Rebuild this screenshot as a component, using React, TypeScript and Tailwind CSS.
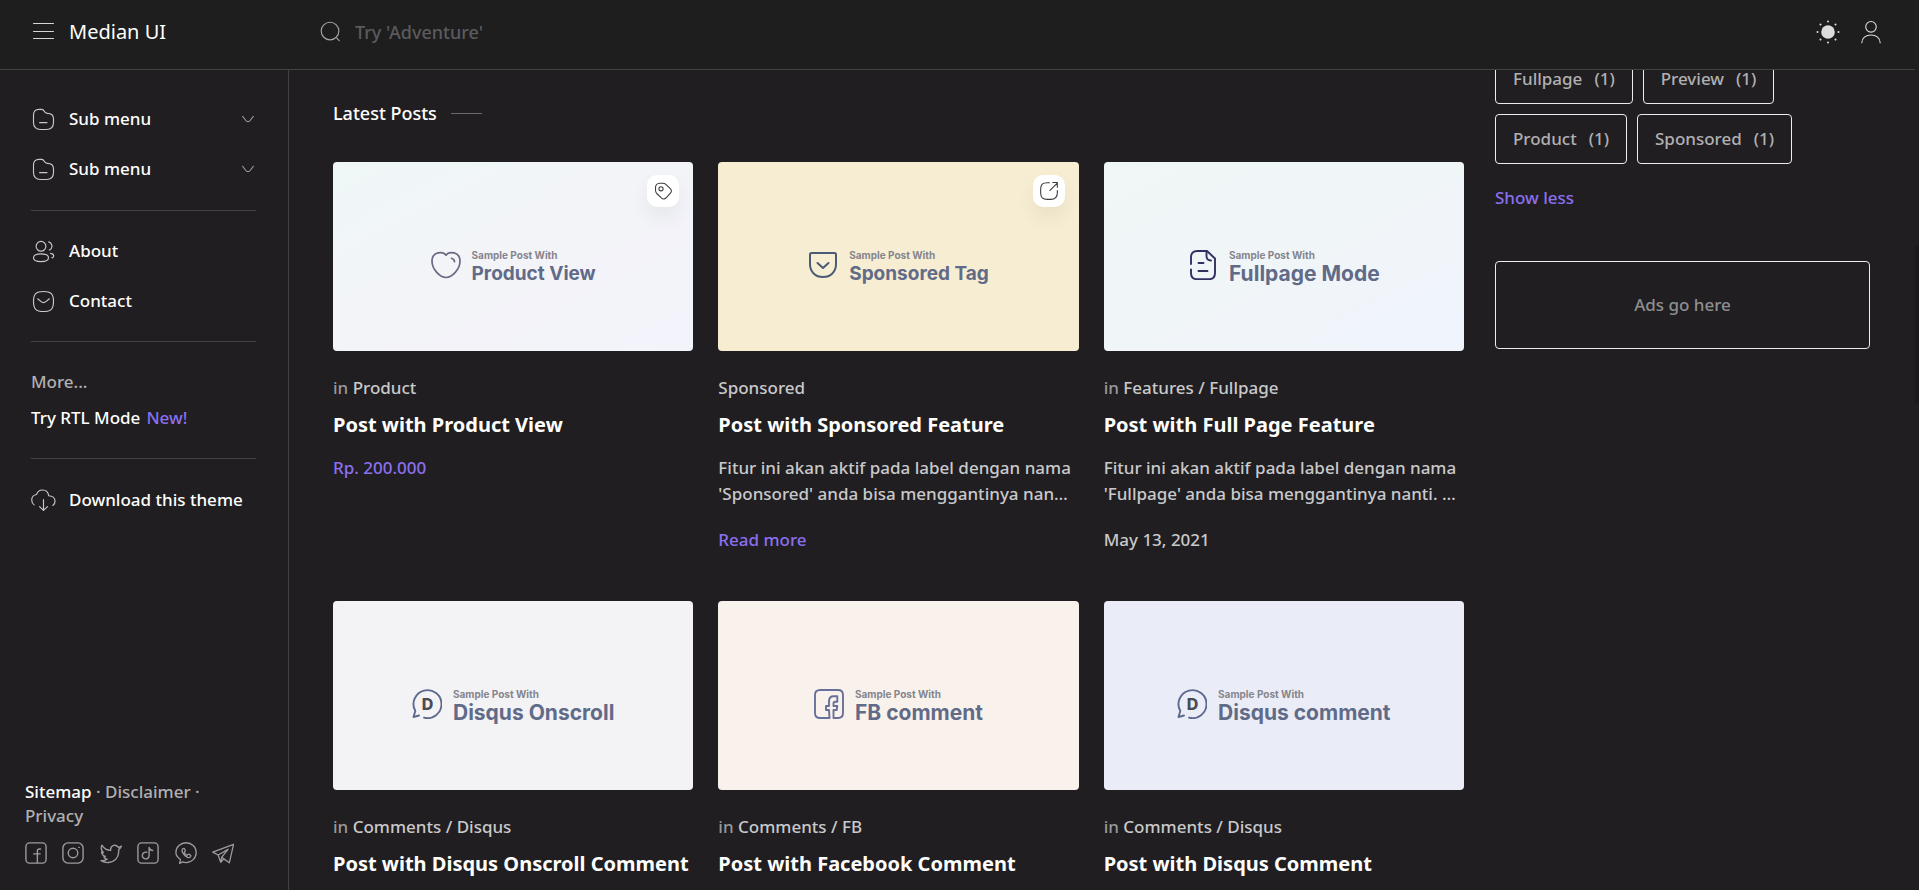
import React from 'react';

type IconProps = { className?: string };

const stroke = {
  fill: 'none',
  stroke: 'currentColor',
  strokeLinecap: 'round' as const,
  strokeLinejoin: 'round' as const,
};

/* ---------- UI icons ---------- */

const MenuIcon = ({ className }: IconProps) => (
  <svg viewBox="0 0 25 25" className={className} {...stroke} strokeWidth={1}>
    <path d="M2.5 4.5h20M2.5 12.5h20M2.5 19.5h20" />
  </svg>
);

const SearchIcon = ({ className }: IconProps) => (
  <svg viewBox="0 0 24 24" className={className} {...stroke} strokeWidth={1.2}>
    <circle cx="11.5" cy="11.5" r="9.2" />
    <path d="M18.5 18.9l2.6 2.6" />
  </svg>
);

const SunIcon = ({ className }: IconProps) => (
  <svg viewBox="0 0 24 24" className={className} {...stroke} strokeWidth={2}>
    <circle cx="12" cy="12" r="6.8" fill="currentColor" stroke="none" />
    <path d="M12 1.500v.01M12 22.500v-.01M1.500 12h.01M22.500 12h-.01M4.500 4.500l.01.01M19.500 19.500l-.01-.01M4.500 19.500l.01-.01M19.500 4.500l-.01.01" />
  </svg>
);

const UserIcon = ({ className }: IconProps) => (
  <svg viewBox="0 0 24 24" className={className} {...stroke} strokeWidth={1.1}>
    <circle cx="12" cy="6.8" r="5.3" />
    <path d="M2.8 22.8c0-4.6 4-7.8 9.2-7.8s9.2 3.2 9.2 7.8" />
  </svg>
);

const FolderIcon = ({ className }: IconProps) => (
  <svg viewBox="0 0 24 24" className={className} {...stroke} strokeWidth={1.1}>
    <path d="M21.6 14.9c0 4.2-2.5 6.7-6.7 6.7H9.1c-4.2 0-6.7-2.5-6.7-6.7V7.9c0-3.6 1.6-5.6 5.4-5.6h2.1c.9 0 1.8.4 2.4 1.2l1.1 1.4c.6.7 1.4 1.2 2.4 1.2 3.600 0 5.800 1.500 5.800 5.400z" />
    <path d="M8.300 15h7" />
  </svg>
);

const ChevronIcon = ({ className }: IconProps) => (
  <svg viewBox="0 0 24 24" className={className} {...stroke} strokeWidth={1.6}>
    <path d="M4 8l4.800 6.200c1.800 2.300 4.600 2.300 6.400 0L20 8" />
  </svg>
);

const PeopleIcon = ({ className }: IconProps) => (
  <svg viewBox="0 0 24 24" className={className} {...stroke} strokeWidth={1.1}>
    <circle cx="9.600" cy="7" r="4.700" />
    <path d="M9.600 14.300c-3.900 0-7.200.9-7.200 3.700s3.300 3.700 7.200 3.700 7.200-.9 7.200-3.700-3.300-3.700-7.200-3.700z" />
    <path d="M17 2.800a4.300 4.300 0 0 1 1.800 7.200l-1.200.6M18.800 13.800c1.900.3 3 1.100 3 2.400 0 .9-.6 1.500-1.700 1.900" />
  </svg>
);

const MailIcon = ({ className }: IconProps) => (
  <svg viewBox="0 0 24 24" className={className} {...stroke} strokeWidth={1.1}>
    <path d="M12 2.400c7.200 0 9.600 2.400 9.600 9.600s-2.400 9.600-9.600 9.600S2.400 19.200 2.400 12 4.800 2.400 12 2.400z" />
    <path d="M6.400 9.400l3.300 2.700c1.400 1.100 3.200 1.100 4.600 0l3.300-2.700" />
  </svg>
);

const DownloadIcon = ({ className }: IconProps) => (
  <svg viewBox="0 0 24 24" className={className} {...stroke} strokeWidth={1.1}>
    <path d="M3 16.200c-1.500-1-2.300-2.700-2.300-4.600 0-2.800 2-5 4.700-5.400C6.200 3.400 8.500 1.900 11 1.900c3.100 0 5.500 2.200 6 5.500 3.300.1 6.100 2.100 6.100 5.400 0 1.700-.8 3.100-2.100 4" />
    <path d="M12 11v10.500M8.200 17.800L12 21.500l3.800-3.700" />
  </svg>
);

const TagIcon = ({ className }: IconProps) => (
  <svg viewBox="0 0 24 24" className={className} {...stroke} strokeWidth={1.300}>
    <path d="M3 8.200c0-3.400 1.800-5.200 5.200-5.400l3.500-.1c1.600 0 2.600.4 3.700 1.400l5.100 4.800c2 1.900 2.100 4 .2 6l-4.700 5.100c-1.900 2-4 2-6 .2l-5.200-4.900C3.700 14.200 3.200 13.200 3.100 11.700z" />
    <circle cx="9.600" cy="9.300" r="2.500" />
  </svg>
);

const ExternalIcon = ({ className }: IconProps) => (
  <svg viewBox="0 0 24 24" className={className} {...stroke} strokeWidth={1.300}>
    <path d="M22 11.500v2.500c0 5.700-2.200 8-8 8h-4c-5.700 0-8-2.300-8-8v-4c0-5.700 2.300-8 8-8h2.500" />
    <path d="M13.200 11.300l8.800-8.800M16.500 1.800H22v5.600" />
  </svg>
);

/* ---------- Social icons ---------- */

const Facebook = ({ className }: IconProps) => (
  <svg viewBox="0 0 24 24" className={className} {...stroke} strokeWidth={1.500}>
    <rect x="1" y="1" width="22" height="22" rx="4" />
    <path d="M17 7.700h-1.300c-1.500 0-2.200.9-2.200 2.200v12.400M9.500 13h7" />
  </svg>
);

const Instagram = ({ className }: IconProps) => (
  <svg viewBox="0 0 24 24" className={className} {...stroke} strokeWidth={1.500}>
    <rect x="1" y="1" width="22" height="22" rx="5.500" />
    <circle cx="12" cy="12" r="5.200" />
    <path d="M18.200 5.800h.6" />
  </svg>
);

const Twitter = ({ className }: IconProps) => (
  <svg viewBox="0 0 24 24" className={className} {...stroke} strokeWidth={1.500}>
    <path d="M23.300 4.500c-.9.700-2 1.100-3.300 1.300C18.700 4 16.800 3.200 14.900 3.700c-2.100.6-3.400 2.300-3.300 4.500v1C7.700 9.300 4.500 7.200 2 3.500c-1.500 4 .2 6.700 1.700 8l-1.900-.3c.5 2.400 1.700 3.800 4.100 4.600l-1.600.7c.8 1.400 2 2.100 3.500 2.300-1.600 1.100-4.200 1.800-6.700 1.600 2.300 1.400 5.300 2.200 8.100 2 6.600-.4 11.200-5.500 11.200-11.800V8.300c1-.9 2.200-2.200 2.900-3.800z" />
  </svg>
);

const TikTok = ({ className }: IconProps) => (
  <svg viewBox="0 0 24 24" className={className} {...stroke} strokeWidth={1.500}>
    <rect x="1" y="1" width="22" height="22" rx="4" />
    <path d="M10.600 11.200a3.700 3.700 0 1 0 2.600 3.700V6c.5 2 1.800 3.100 3.900 3.300" />
  </svg>
);

const WhatsApp = ({ className }: IconProps) => (
  <svg viewBox="0 0 24 24" className={className} {...stroke} strokeWidth={1.400}>
    <path d="M5 23.300l1-4.300C3.200 17.100 1 14.500 1 11.400 1 5.400 6 .8 12.100.8s11 4.700 11 10.700-4.900 10.900-11 10.900c-1.500 0-2.700-.2-3.800-.7z" />
    <path d="M8.600 7.300c-1.200.8-1.100 2.400-.2 4.300 1.200 2.400 2.800 4.100 5.300 5.100 1.600.6 2.800.4 3.500-.9.300-.7.100-1.100-.4-1.500l-1.300-.9c-.6-.4-1.100-.2-1.600.5-.5.600-1 .4-1.700-.1-.9-.7-1.500-1.400-1.800-2.200-.3-.7.100-1 .5-1.500.4-.4.400-.8.200-1.300l-.7-1.400c-.4-.7-1.100-.7-1.800-.1z" />
  </svg>
);

const Telegram = ({ className }: IconProps) => (
  <svg viewBox="0 0 24 24" className={className} {...stroke} strokeWidth={1.400}>
    <path d="M23.500 2.500L.800 11l5.900 3.200 2.800 7.900 3.400-3.700 6 4.300zM6.700 14.200L17.500 8M9.500 22.100l1.200-5.700L17.500 8M10.700 16.400l2.200 2" />
  </svg>
);

/* ---------- Thumbnail art ---------- */

const HeartArt = () => (
  <svg viewBox="0 0 30 30" className="h-[30px] w-[30px] text-[#6a6883]" {...stroke} strokeWidth={1.700}>
    <path d="M15 5.200C12.200 1.100 1 1.300 1 11.200 1 19.200 9 27.500 15 27.500S29 19.200 29 11.200C29 1.300 17.800 1.100 15 5.200z" />
    <path d="M20.500 8.300c2 .6 2.900 1.700 3 3.400" />
  </svg>
);

const PocketArt = () => (
  <svg viewBox="0 0 30 30" className="h-[30px] w-[30px] text-[#4b5a75]" {...stroke} strokeWidth={2}>
    <path d="M3.500 3h23C27.500 3 28 3.600 28 4.600V14c0 7.800-5.500 13-13 13S2 21.800 2 14V4.600C2 3.600 2.500 3 3.500 3z" />
    <path d="M9.500 13l5.500 5 5.500-5" />
  </svg>
);

const DocumentArt = () => (
  <svg viewBox="0 0 30 30" className="h-[30px] w-[30px] text-[#322f63]" {...stroke} strokeWidth={1.900}>
    <path d="M3 14V7.500C3 3.300 5 1 9.300 1H19l8 7.500V23c0 4-2 6.200-6.200 6.200H9.200C5 29.200 3 27 3 23v-3.500" />
    <path d="M18.500 1.500V6c0 3 1.500 4.500 4.500 4.500M10.500 13h5M10.500 21h9" />
  </svg>
);

const DisqusArt = () => (
  <svg viewBox="0 0 30 30" className="h-[30px] w-[30px] text-[#5d6a8c]" {...stroke} strokeWidth={1.900}>
    <path d="M7 26.500l-5.500 1.500 1.800-6A14 14 0 1 1 12 28.700" />
    <text
      x="15.500"
      y="21"
      textAnchor="middle"
      fontFamily="Inter, sans-serif"
      fontSize="16"
      fontWeight="800"
      fill="#4b4c52"
      stroke="none"
    >
      D
    </text>
  </svg>
);

const FacebookArt = () => (
  <svg viewBox="0 0 30 30" className="h-[30px] w-[30px] text-[#68709a]" {...stroke} strokeWidth={1.900}>
    <path d="M15.500 29H6c-3.300 0-5-1.700-5-5V6c0-3.300 1.700-5 5-5h18c3.300 0 5 1.700 5 5v18c0 3.300-1.700 5-5 5h-4.500v-8h3.200l.6-4h-3.800v-2.500c0-1 .6-1.700 1.800-1.700h2V7.300h-3.500c-3 0-4.800 1.800-4.800 5V17h-3v4h3z" />
  </svg>
);

/* ---------- Data ---------- */

type Post = {
  meta: string;
  noPrefix?: boolean;
  title: string;
  label: string;
  labelStyle: string;
  art: React.ReactNode;
  thumb: string;
  badge?: React.ReactNode;
  price?: string;
  text?: string;
  link?: string;
  date?: string;
};

const posts: Post[] = [
  {
    meta: 'Product',
    title: 'Post with Product View',
    label: 'Product View',
    labelStyle: 'text-[19px]',
    art: <HeartArt />,
    thumb: 'bg-linear-to-br from-[#eff7f7] via-[#f3f4f8] to-[#f3f3fc]',
    badge: <TagIcon className="h-5 w-5" />,
    price: 'Rp. 200.000',
  },
  {
    meta: 'Sponsored',
    noPrefix: true,
    title: 'Post with Sponsored Feature',
    label: 'Sponsored Tag',
    labelStyle: 'text-[19px]',
    art: <PocketArt />,
    thumb: 'bg-[#f7edd2]',
    badge: <ExternalIcon className="h-5 w-5" />,
    text: "Fitur ini akan aktif pada label dengan nama 'Sponsored' anda bisa menggantinya nan…",
    link: 'Read more',
  },
  {
    meta: 'Features / Fullpage',
    title: 'Post with Full Page Feature',
    label: 'Fullpage Mode',
    labelStyle: 'text-[21px]',
    art: <DocumentArt />,
    thumb: 'bg-linear-to-br from-[#f0f7f6] via-[#f0f5f8] to-[#f0f4fd]',
    text: "Fitur ini akan aktif pada label dengan nama 'Fullpage' anda bisa menggantinya nanti. …",
    date: 'May 13, 2021',
  },
  {
    meta: 'Comments / Disqus',
    title: 'Post with Disqus Onscroll Comment',
    label: 'Disqus Onscroll',
    labelStyle: 'text-[21px]',
    art: <DisqusArt />,
    thumb: 'bg-[#f3f2f5]',
  },
  {
    meta: 'Comments / FB',
    title: 'Post with Facebook Comment',
    label: 'FB comment',
    labelStyle: 'text-[21px]',
    art: <FacebookArt />,
    thumb: 'bg-[#f9f2ec]',
  },
  {
    meta: 'Comments / Disqus',
    title: 'Post with Disqus Comment',
    label: 'Disqus comment',
    labelStyle: 'text-[21px]',
    art: <DisqusArt />,
    thumb: 'bg-[#eaedf8]',
  },
];

const tags = ['Fullpage', 'Preview', 'Product', 'Sponsored'];
const socials = [
  { name: 'Facebook', icon: Facebook },
  { name: 'Instagram', icon: Instagram },
  { name: 'Twitter', icon: Twitter },
  { name: 'TikTok', icon: TikTok },
  { name: 'WhatsApp', icon: WhatsApp },
  { name: 'Telegram', icon: Telegram },
];

/* ---------- Parts ---------- */

const Header = () => (
  <header className="relative z-10 mr-1 flex h-[70px] shrink-0 items-center border-b border-[#434345] bg-[#1e1e1e] pb-[6px] pl-[31px] pr-8">
    <div className="flex w-[288px] items-center gap-[13px]">
      <button aria-label="Menu" className="text-[#d6d6d8]">
        <MenuIcon className="h-[25px] w-[25px]" />
      </button>
      <a href="#" className="text-xl font-normal text-[#fefefe]">Median UI</a>
    </div>
    <label className="flex flex-1 items-center gap-[13px] text-[#a5a5a7]">
      <SearchIcon className="h-[23px] w-[23px]" />
      <input
        type="text"
        aria-label="Search"
        placeholder="Try 'Adventure'"
        className="w-80 bg-transparent text-lg outline-none placeholder:text-[#5b5b5d]"
      />
    </label>
    <div className="flex items-center gap-[19px] text-[#dcdcde]">
      <button aria-label="Dark mode">
        <SunIcon className="h-6 w-6" />
      </button>
      <button aria-label="Profile">
        <UserIcon className="h-6 w-6" />
      </button>
    </div>
  </header>
);

const NavItem = ({
  icon: Icon,
  label,
  more,
}: {
  icon: React.FC<IconProps>;
  label: string;
  more?: boolean;
}) => (
  <li>
    <a href="#" className="flex h-[50px] items-center gap-[13px] text-[#fefefe]">
      <Icon className="h-[25px] w-[25px] text-[#c8c8ca]" />
      <span className="flex-1">{label}</span>
      {more && <ChevronIcon className="h-4 w-4 text-[#9b9b9d]" />}
    </a>
  </li>
);

const Sidebar = () => (
  <aside className="flex w-[289px] shrink-0 flex-col justify-between border-r border-[#434345] pb-[26px]">
    <nav className="pl-[31px] pr-8 pt-6">
      <ul className="border-b border-[#434345] pb-4">
        <NavItem icon={FolderIcon} label="Sub menu" more />
        <NavItem icon={FolderIcon} label="Sub menu" more />
      </ul>
      <ul className="border-b border-[#434345] py-[15px]">
        <NavItem icon={PeopleIcon} label="About" />
        <NavItem icon={MailIcon} label="Contact" />
      </ul>
      <div className="border-b border-[#434345] py-[22px]">
        <p className="py-[6px] leading-6 text-[#b0b0b2]">More...</p>
        <a href="#" className="flex gap-[6px] py-[6px] leading-6 text-[#fefefe]">
          Try RTL Mode <span className="text-[#8b6ff0]">New!</span>
        </a>
      </div>
      <ul className="py-4">
        <NavItem icon={DownloadIcon} label="Download this theme" />
      </ul>
    </nav>
    <footer className="pl-[25px] pr-[54px]">
      <p className="leading-6 text-[#b0b0b2]">
        <a href="#" className="text-[#fefefe]">Sitemap</a> · <a href="#">Disclaimer</a> ·{' '}
        <a href="#">Privacy</a>
      </p>
      <div className="mt-[14px] flex justify-between text-[#9c9c9e]">
        {socials.map(({ name, icon: Icon }) => (
          <a key={name} href="#" aria-label={name}>
            <Icon className="h-[22px] w-[22px]" />
          </a>
        ))}
      </div>
    </footer>
  </aside>
);

const PostCard = ({ post }: { post: Post }) => (
  <article className="min-w-0">
    <div className={`relative flex h-[189px] items-center justify-center gap-[11px] rounded pt-[22px] ${post.thumb}`}>
      <div className="pb-[6px]">{post.art}</div>
      <div className="font-[Inter,sans-serif] font-bold">
        <p className="text-[10px] leading-3 text-[#85858d]">Sample Post With</p>
        <p className={`leading-[26px] text-[#616b88] ${post.labelStyle}`}>{post.label}</p>
      </div>
      {post.badge && (
        <span className="absolute right-[14px] top-[13px] flex h-8 w-8 items-center justify-center rounded-[10px] bg-white text-[#3c3c40] shadow-[0_10px_20px_rgba(0,0,0,0.06)]">
          {post.badge}
        </span>
      )}
    </div>
    <p className="mt-[25px] leading-6 text-[#c9c9cb]">
      {!post.noPrefix && <span className="text-[#98989a]">in </span>}
      {post.meta}
    </p>
    <h3 className="mt-[11px] text-xl font-bold leading-7 text-[#fefefe]">
      <a href="#">{post.title}</a>
    </h3>
    {post.price && <p className="mt-4 leading-[26px] text-[#8b6ff0]">{post.price}</p>}
    {post.text && <p className="mt-4 leading-[26px] text-[#c9c9cb]">{post.text}</p>}
    {post.link && (
      <a href="#" className="mt-[21px] block leading-6 text-[#8b6ff0]">
        {post.link}
      </a>
    )}
    {post.date && <time className="mt-[21px] block leading-6 text-[#c9c9cb]">{post.date}</time>}
  </article>
);

const Widgets = () => (
  <aside className="-mt-4 w-[375px] shrink-0">
    <div className="flex flex-wrap gap-[10px]">
      {tags.map((tag) => (
        <a
          key={tag}
          href="#"
          className="flex h-[50px] items-center gap-3 rounded border border-[#ececee] px-[17px] text-[#b0b0b2]"
        >
          {tag} <span>(1)</span>
        </a>
      ))}
    </div>
    <button className="mt-[22px] block leading-6 text-[#8b6ff0]">Show less</button>
    <div className="mt-[51px] flex h-[88px] items-center justify-center rounded border border-[#ececee] text-[#8e8e90]">
      Ads go here
    </div>
  </aside>
);

const App: React.FC = () => {
  return (
    <div className="relative flex h-screen flex-col overflow-hidden bg-[#201e20] font-['Noto_Sans',sans-serif] text-[17px] font-medium">
      <Header />
      <div className="flex min-h-0 flex-1">
        <Sidebar />
        <div className="flex min-w-0 flex-1 gap-[31px] overflow-hidden pl-11 pr-[49px]">
          <main className="min-w-0 flex-1 pt-[29px]">
            <h2 className="mb-[35px] flex items-center gap-[14px] text-lg leading-7 text-[#fefefe]">
              Latest Posts
              <span className="h-px w-[31px] bg-[#6a6a6c]" />
            </h2>
            <div className="grid grid-cols-3 gap-x-[25px] gap-y-[49px]">
              {posts.map((post) => (
                <PostCard key={post.title} post={post} />
              ))}
            </div>
          </main>
          <Widgets />
        </div>
      </div>
      {/* Scroll thumb */}
      <div className="absolute right-0 top-[246px] h-[158px] w-1 bg-[#1b191b]" />
    </div>
  );
};

export default App;
